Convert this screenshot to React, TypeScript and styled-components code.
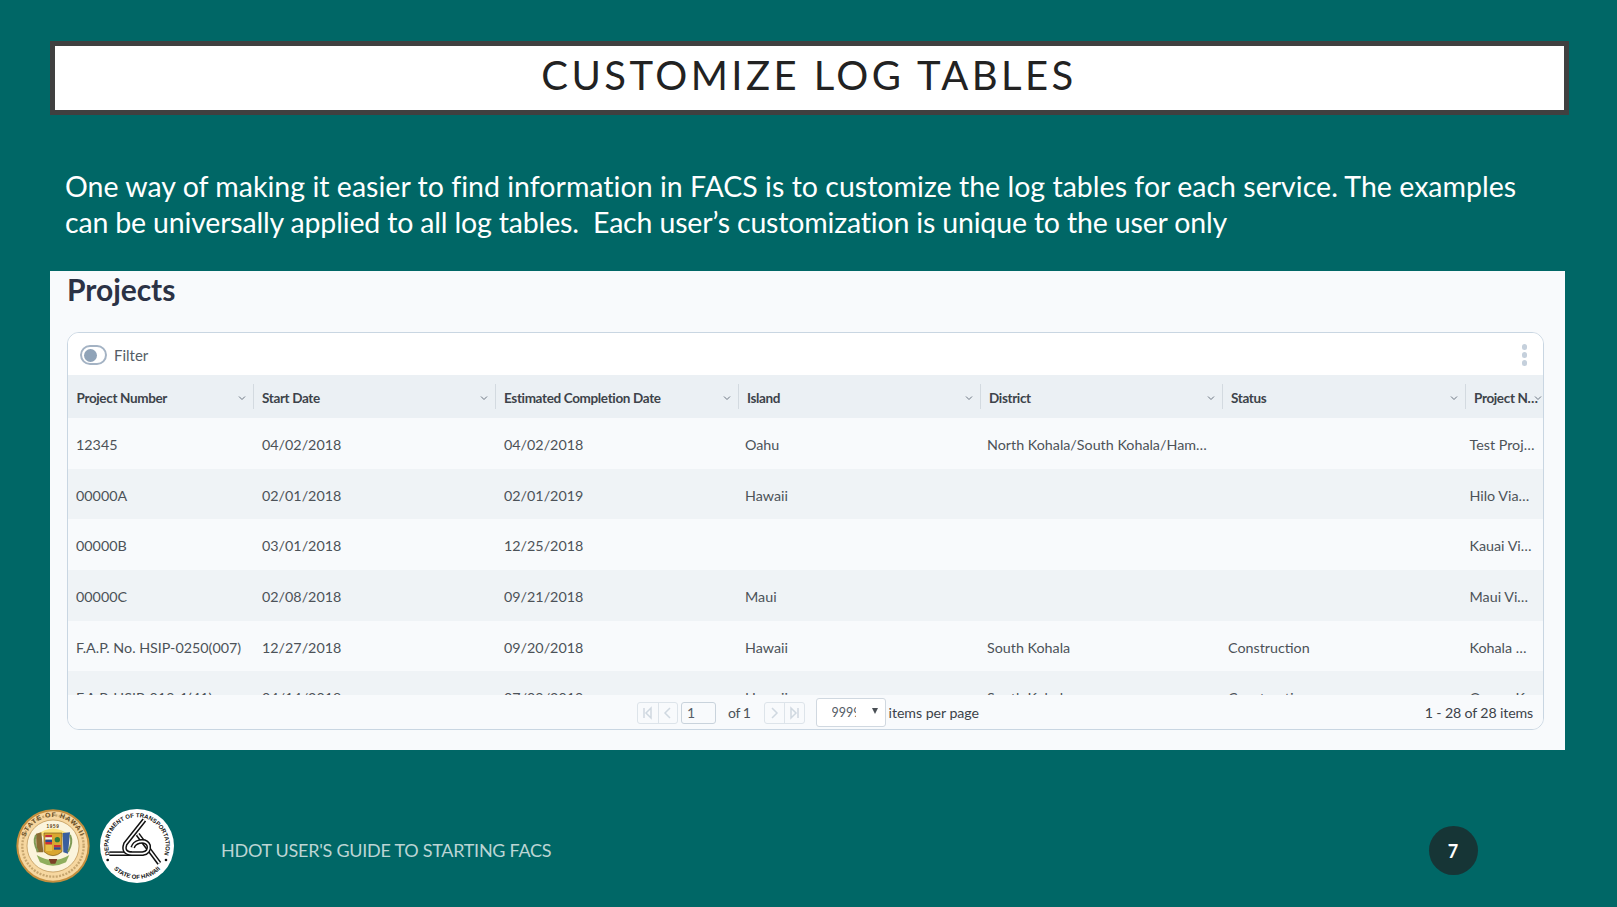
import React from "react";
import styled, { createGlobalStyle } from "styled-components";

const Global = createGlobalStyle`
  html, body { margin: 0; padding: 0; background: #006766; }
  * { box-sizing: border-box; }
  body { font-family: "Lato", "Liberation Sans", sans-serif; }
`;

const Page = styled.div`
  width: 1617px;
  height: 907px;
  overflow: hidden;
  background: #006766;
  display: flex;
  flex-direction: column;
`;

const TitleBox = styled.header`
  margin: 41px 0 0 49.5px;
  width: 1519px;
  height: 74px;
  border: 5px solid #404040;
  background: #fff;
  display: flex;
  align-items: center;
  justify-content: center;
  padding-bottom: 6px;
`;

const Title = styled.h1`
  margin: 0;
  font-family: "Lato", sans-serif;
  font-weight: 400;
  font-size: 40px;
  letter-spacing: 3.45px;
  color: #222;
  white-space: nowrap;
`;

const Intro = styled.div`
  margin: 53px 0 1px 65px;
  font-size: 28.5px;
  line-height: 36px;
  color: #fff;
`;

const IntroLine = styled.p<{ $tracking: number }>`
  margin: 0;
  white-space: pre;
  letter-spacing: ${(p) => p.$tracking}px;
`;

const Panel = styled.section`
  margin: 30px 0 0 50px;
  width: 1515px;
  height: 479px;
  background: #f8fafc;
  padding: 0 21px 0 17px;
`;

const PanelTitle = styled.h2`
  margin: 0;
  height: 61px;
  line-height: 37px;
  font-size: 30px;
  font-weight: 700;
  letter-spacing: -0.05px;
  color: #2b3245;
`;

const Card = styled.div`
  height: 398px;
  border: 1px solid #c9d6e2;
  border-radius: 12px;
  overflow: hidden;
  display: flex;
  flex-direction: column;
  background: #f8fafc;
`;

const Toolbar = styled.div`
  height: 42px;
  flex: none;
  background: #fff;
  display: flex;
  align-items: center;
  padding: 2px 16px 0 12px;
`;

const Toggle = styled.span`
  width: 27px;
  height: 20px;
  border: 2px solid #a4b3c4;
  border-radius: 10px;
  background: #fff;
  padding: 1.5px;
  display: flex;
`;

const Knob = styled.span`
  width: 13px;
  height: 13px;
  border-radius: 50%;
  background: #8fa3b8;
`;

const FilterLabel = styled.span`
  margin-left: 7px;
  font-size: 15px;
  color: #555d66;
`;

const Kebab = styled.span`
  margin-left: auto;
  display: flex;
  flex-direction: column;
  gap: 2.5px;
`;

const Dot = styled.span`
  width: 5.5px;
  height: 5.5px;
  border-radius: 50%;
  background: #c5d0dc;
`;

const HeaderRow = styled.div`
  height: 43px;
  flex: none;
  background: #ebf0f4;
  display: grid;
  grid-template-columns: 185px 242px 243px 242px 242px 243px 1fr;
  align-items: center;
`;

const HeaderCell = styled.div<{ $first?: boolean; $last?: boolean }>`
  height: 25px;
  min-width: 0;
  display: flex;
  align-items: center;
  padding: 2px ${(p) => (p.$last ? "1px" : "7px")} 0 ${(p) => (p.$first ? "7.5px" : "8px")};
  border-left: 1px solid ${(p) => (p.$first ? "transparent" : "#d3dae0")};
`;

const HeaderLabel = styled.span`
  flex: 1;
  min-width: 0;
  font-size: 13.5px;
  font-weight: 700;
  letter-spacing: -0.35px;
  color: #3d434a;
  white-space: nowrap;
  overflow: hidden;
  text-overflow: ellipsis;
`;

const Chevron = styled.svg<{ $tight?: boolean }>`
  flex: none;
  width: 8px;
  height: 6px;
  margin-left: ${(p) => (p.$tight ? "-8px" : "1px")};
  fill: none;
  stroke: #6b7580;
  stroke-width: 1;
`;

const Rows = styled.div`
  height: 277px;
  flex: none;
  overflow: hidden;
`;

const DataRow = styled.div`
  height: 50.7px;
  display: grid;
  grid-template-columns: 186px 242px 241px 242px 241px 241.5px 1fr;
  align-items: center;
  background: #f8fafc;
  &:nth-child(even) { background: #eff3f6; }
`;

const DataCell = styled.div`
  min-width: 0;
  padding: 2px 10px 0 8px;
  font-size: 14.3px;
  color: #4c5258;
  white-space: nowrap;
  overflow: hidden;
  text-overflow: ellipsis;
  &:last-child { padding-right: 8px; }
`;

const Footer = styled.div`
  flex: 1;
  display: flex;
  align-items: center;
  padding: 1px 10px 0 569px;
  background: #f8fafc;
  font-size: 14.2px;
  color: #4c5258;
`;

const PagerGroup = styled.div`
  display: flex;
  height: 22px;
  border: 1px solid #dde4ea;
  border-radius: 3px;
`;

const PagerBtn = styled.span`
  width: 19.5px;
  display: flex;
  align-items: center;
  justify-content: center;
  & + & { border-left: 1px solid #dde4ea; }
  svg { width: 11px; height: 14px; fill: none; stroke: #cfd8e0; stroke-width: 1.5; }
`;

const PageInput = styled.span`
  width: 35px;
  height: 22px;
  margin-left: 3px;
  border: 1px solid #c9d3dc;
  border-radius: 3px;
  padding-left: 5px;
  font-size: 14px;
  line-height: 20px;
  color: #555d66;
`;

const OfText = styled.span`
  margin: 0 13px 0 12px;
  font-size: 14px;
  letter-spacing: -0.4px;
`;

const Select = styled.span`
  width: 70px;
  height: 29px;
  margin-left: 11px;
  border: 1px solid #d0d8e0;
  border-radius: 3px;
  background: #fff;
  display: flex;
  align-items: center;
  padding-left: 15px;
`;

const SelectValue = styled.span`
  width: 24px;
  overflow: hidden;
  white-space: nowrap;
  font-size: 12.5px;
  color: #555d66;
`;

const Caret = styled.span`
  margin-left: 16px;
  margin-top: -3px;
  width: 0;
  height: 0;
  border-left: 3px solid transparent;
  border-right: 3px solid transparent;
  border-top: 6px solid #4a4f55;
`;

const PerPage = styled.span`
  margin-left: 3px;
  letter-spacing: -0.05px;
  color: #3d434a;
`;

const Count = styled.span`
  margin-left: auto;
  letter-spacing: -0.15px;
  color: #3d434a;
`;

const SlideFooter = styled.footer`
  margin-top: 59px;
  height: 74px;
  padding-left: 16px;
  display: flex;
  align-items: center;
`;

const Seal = styled.svg`
  width: 74px;
  height: 74px;
  flex: none;
  & + & { margin-left: 10px; }
`;

const FooterText = styled.span`
  margin: 7px 0 0 47px;
  font-size: 18px;
  letter-spacing: -0.27px;
  color: #bcd5d4;
`;

const PageNumber = styled.span`
  margin: 9px 139.5px 0 auto;
  width: 49px;
  height: 49px;
  border-radius: 50%;
  background: #163536;
  color: #fff;
  font-weight: 700;
  font-size: 18px;
  display: flex;
  align-items: center;
  justify-content: center;
`;

const columns = ["Project Number", "Start Date", "Estimated Completion Date", "Island", "District", "Status", "Project Name"];
const rows = [
  ["12345", "04/02/2018", "04/02/2018", "Oahu", "North Kohala/South Kohala/Hamakua/Hilo", "", "Test Project"],
  ["00000A", "02/01/2018", "02/01/2019", "Hawaii", "", "", "Hilo Viaduct"],
  ["00000B", "03/01/2018", "12/25/2018", "", "", "", "Kauai Viaduct"],
  ["00000C", "02/08/2018", "09/21/2018", "Maui", "", "", "Maui Viewpoint"],
  ["F.A.P. No. HSIP-0250(007)", "12/27/2018", "09/20/2018", "Hawaii", "South Kohala", "Construction", "Kohala Mountain"],
  ["F.A.P. HSIP-019-1(41)", "04/14/2018", "07/09/2019", "Hawaii", "South Kohala", "Construction", "Queen Ka"],
];

const StateSeal = () => (
  <Seal viewBox="0 0 222 222">
    <defs>
      <path id="sealTop" d="M24 111 A87 87 0 0 1 198 111" />
    </defs>
    <circle cx="111" cy="111" r="110" fill="#c48f3f" />
    <circle cx="111" cy="111" r="104" fill="#f6d7a0" />
    <circle cx="111" cy="111" r="78" fill="#fbf4dc" stroke="#b58a46" strokeWidth="2" />
    <text fontFamily="Liberation Sans, sans-serif" fontWeight="700" fontSize="20" letterSpacing="3" fill="#5a4420">
      <textPath href="#sealTop" startOffset="50%" textAnchor="middle">STATE OF HAWAII</textPath>
    </text>
    <text x="111" y="56" textAnchor="middle" fontFamily="Liberation Sans, sans-serif" fontWeight="700" fontSize="14" letterSpacing="2" fill="#5a4420">1959</text>
    <path d="M111 110 L70 72 L86 64 L100 60 L111 58 L122 60 L136 64 L152 72 Z" fill="#fbe27a" />
    <path d="M84 72 H138 V128 Q111 152 84 128 Z" fill="#d9a62f" stroke="#7a5a1d" strokeWidth="2" />
    <rect x="88" y="78" width="20" height="7" fill="#c8303a" />
    <rect x="88" y="85" width="20" height="7" fill="#f6f2e8" />
    <rect x="88" y="92" width="20" height="7" fill="#2c4a8f" />
    <rect x="88" y="99" width="20" height="7" fill="#c8303a" />
    <circle cx="124" cy="92" r="8" fill="#2f7d3a" />
    <rect x="114" y="108" width="20" height="7" fill="#c8303a" />
    <rect x="114" y="115" width="20" height="7" fill="#2c4a8f" />
    <rect x="90" y="108" width="18" height="18" fill="#e6c04a" />
    <path d="M60 74 L76 70 L82 130 L62 130 Z" fill="#8a6a33" />
    <path d="M140 72 L162 70 L156 134 L142 130 Z" fill="#3a5f9e" />
    <path d="M66 128 Q50 100 60 78 M156 128 Q172 100 162 78" stroke="#7f9a55" strokeWidth="6" fill="none" />
    <path d="M62 138 Q111 168 160 138 L150 160 Q111 180 72 160 Z" fill="#8fae5d" />
    <path d="M98 150 H124 L118 164 H104 Z" fill="#7a3f25" />
    <circle cx="111" cy="111" r="92" fill="none" stroke="#8d6b33" strokeWidth="7" strokeDasharray="6 4" opacity=".45" />
  </Seal>
);

const roadSix = "M133 33 L76 105 Q66 132 96 134 L128 134 Q150 130 146 110 Q140 94 118 98 Q102 102 98 116";
const roadLeft = "M28 134 H96";
const roadDiagonal = "M113 76 L178 163";

const DotSeal = () => (
  <Seal viewBox="0 0 222 222">
    <defs>
      <path id="dotTop" d="M33 147 A86 86 0 1 1 189 147" />
      <path id="dotBottom" d="M33 171 A98 98 0 0 0 189 171" />
    </defs>
    <circle cx="111" cy="111" r="111" fill="#fff" />
    <text fontFamily="Liberation Sans, sans-serif" fontWeight="700" fontSize="18" fill="#111">
      <textPath href="#dotTop" startOffset="50%" textAnchor="middle">DEPARTMENT OF TRANSPORTATION</textPath>
    </text>
    <text fontFamily="Liberation Sans, sans-serif" fontWeight="700" fontSize="18" fill="#111">
      <textPath href="#dotBottom" startOffset="50%" textAnchor="middle">STATE OF HAWAII</textPath>
    </text>
    <circle cx="23" cy="153" r="4" fill="#111" />
    <circle cx="198" cy="153" r="4" fill="#111" />
    <g fill="none" strokeLinecap="butt">
      <path d={roadDiagonal} stroke="#111" strokeWidth="14" />
      <path d={roadDiagonal} stroke="#fff" strokeWidth="5" />
      <path d={roadLeft} stroke="#111" strokeWidth="14" />
      <path d={roadLeft} stroke="#fff" strokeWidth="5" />
      <path d={roadSix} stroke="#111" strokeWidth="14" />
      <path d={roadSix} stroke="#fff" strokeWidth="5" />
    </g>
  </Seal>
);

export default function App() {
  return (
    <Page>
      <Global />
      <TitleBox>
        <Title>CUSTOMIZE LOG TABLES</Title>
      </TitleBox>
      <Intro>
        <IntroLine $tracking={0.02}>One way of making it easier to find information in FACS is to customize the log tables for each service. The examples</IntroLine>
        <IntroLine $tracking={-0.17}>{"can be universally applied to all log tables.  Each user’s customization is unique to the user only"}</IntroLine>
      </Intro>
      <Panel>
        <PanelTitle>Projects</PanelTitle>
        <Card>
          <Toolbar>
            <Toggle><Knob /></Toggle>
            <FilterLabel>Filter</FilterLabel>
            <Kebab><Dot /><Dot /><Dot /></Kebab>
          </Toolbar>
          <HeaderRow>
            {columns.map((c, i) => (
              <HeaderCell key={c} $first={i === 0} $last={i === columns.length - 1}>
                <HeaderLabel>{c}</HeaderLabel>
                <Chevron viewBox="0 0 8 6" $tight={i === columns.length - 1}>
                  <path d="M1 1.5 L4 4.5 L7 1.5" />
                </Chevron>
              </HeaderCell>
            ))}
          </HeaderRow>
          <Rows>
            {rows.map((r, i) => (
              <DataRow key={i}>
                {r.map((v, j) => <DataCell key={j}>{v}</DataCell>)}
              </DataRow>
            ))}
          </Rows>
          <Footer>
            <PagerGroup>
              <PagerBtn><svg viewBox="0 0 11 14"><path d="M2 2 V12 M9 2 L4 7 L9 12 Z" /></svg></PagerBtn>
              <PagerBtn><svg viewBox="0 0 11 14"><path d="M8 2 L3 7 L8 12" /></svg></PagerBtn>
            </PagerGroup>
            <PageInput>1</PageInput>
            <OfText>of 1</OfText>
            <PagerGroup>
              <PagerBtn><svg viewBox="0 0 11 14"><path d="M3 2 L8 7 L3 12" /></svg></PagerBtn>
              <PagerBtn><svg viewBox="0 0 11 14"><path d="M9 2 V12 M2 2 L7 7 L2 12 Z" /></svg></PagerBtn>
            </PagerGroup>
            <Select>
              <SelectValue>9999</SelectValue>
              <Caret />
            </Select>
            <PerPage>items per page</PerPage>
            <Count>1 - 28 of 28 items</Count>
          </Footer>
        </Card>
      </Panel>
      <SlideFooter>
        <StateSeal />
        <DotSeal />
        <FooterText>HDOT USER'S GUIDE TO STARTING FACS</FooterText>
        <PageNumber>7</PageNumber>
      </SlideFooter>
    </Page>
  );
}
